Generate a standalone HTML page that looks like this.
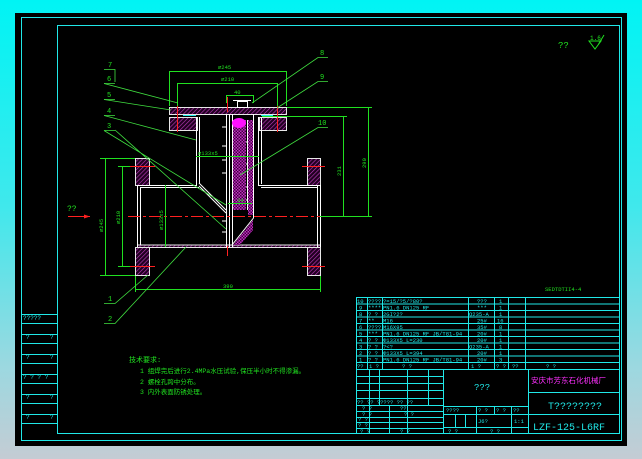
<!DOCTYPE html>
<html><head><meta charset="utf-8"><style>
html,body{margin:0;padding:0;width:642px;height:459px;overflow:hidden;background:linear-gradient(180deg,#00f4f4 0%,#40e8ec 45%,#9cd8e0 80%,#c4ccd4 100%);}
svg{position:absolute;left:0;top:0}
text{font-family:"Liberation Mono","Noto Sans CJK SC",monospace}
</style></head><body>
<svg width="642" height="459" viewBox="0 0 642 459" xmlns="http://www.w3.org/2000/svg">
<defs>
<pattern id="h" width="3" height="3" patternUnits="userSpaceOnUse" patternTransform="rotate(45)"><rect width="3" height="3" fill="#200020"/><line x1="0" y1="0" x2="0" y2="3" stroke="#c03cc0" stroke-width="1.2"/></pattern>
<pattern id="c" width="3" height="3" patternUnits="userSpaceOnUse"><rect width="3" height="3" fill="#c030c0"/><rect width="1.5" height="1.5" fill="#400040"/><rect x="1.5" y="1.5" width="1.5" height="1.5" fill="#400040"/></pattern>
</defs>
<rect x="15" y="13" width="612" height="433" fill="#000"/>
<g fill="none" stroke="#20e8e8" stroke-width="1">
<rect x="21.5" y="17.5" width="600" height="423"/>
<rect x="57.5" y="25.5" width="562" height="408"/>
<!-- left strip -->
<line x1="21" y1="314.5" x2="57" y2="314.5"/><line x1="21" y1="323.5" x2="57" y2="323.5"/>
<line x1="21" y1="334.5" x2="57" y2="334.5"/><line x1="21" y1="343.5" x2="57" y2="343.5"/>
<line x1="21" y1="354.5" x2="57" y2="354.5"/><line x1="21" y1="363.5" x2="57" y2="363.5"/>
<line x1="21" y1="374.5" x2="57" y2="374.5"/><line x1="21" y1="383.5" x2="57" y2="383.5"/>
<line x1="21" y1="394.5" x2="57" y2="394.5"/><line x1="21" y1="403.5" x2="57" y2="403.5"/>
<line x1="21" y1="414.5" x2="57" y2="414.5"/><line x1="21" y1="423.5" x2="57" y2="423.5"/>
<!-- parts list -->
<rect x="356.5" y="297.5" width="263" height="136"/>
<line x1="356" y1="304" x2="619" y2="304"/><line x1="356" y1="310.5" x2="619" y2="310.5"/>
<line x1="356" y1="317" x2="619" y2="317"/><line x1="356" y1="323.5" x2="619" y2="323.5"/>
<line x1="356" y1="330" x2="619" y2="330"/><line x1="356" y1="336.5" x2="619" y2="336.5"/>
<line x1="356" y1="343" x2="619" y2="343"/><line x1="356" y1="349.5" x2="619" y2="349.5"/>
<line x1="356" y1="356" x2="619" y2="356"/><line x1="356" y1="362.5" x2="619" y2="362.5"/>
<line x1="356" y1="369.5" x2="619" y2="369.5"/>
<line x1="367.5" y1="297" x2="367.5" y2="369"/><line x1="382.5" y1="297" x2="382.5" y2="369"/>
<line x1="468.5" y1="297" x2="468.5" y2="369"/><line x1="494.5" y1="297" x2="494.5" y2="369"/>
<line x1="508.5" y1="297" x2="508.5" y2="369"/><line x1="525.5" y1="297" x2="525.5" y2="369"/>
<!-- title block -->
<line x1="443.5" y1="369" x2="443.5" y2="434"/><line x1="528.5" y1="369" x2="528.5" y2="434"/>
<line x1="528" y1="392.5" x2="619" y2="392.5"/><line x1="528" y1="414.5" x2="619" y2="414.5"/>
<line x1="443" y1="406.5" x2="528" y2="406.5"/><line x1="443" y1="414.5" x2="528" y2="414.5"/>
<line x1="443" y1="427.5" x2="528" y2="427.5"/>
<line x1="476.5" y1="406" x2="476.5" y2="434"/><line x1="494.5" y1="406" x2="494.5" y2="414"/>
<line x1="511.5" y1="406" x2="511.5" y2="434"/><line x1="455.5" y1="414" x2="455.5" y2="428"/>
<line x1="465.5" y1="414" x2="465.5" y2="428"/>
<line x1="356" y1="376.5" x2="443" y2="376.5"/><line x1="356" y1="383.5" x2="443" y2="383.5"/>
<line x1="356" y1="390.5" x2="443" y2="390.5"/><line x1="356" y1="398.5" x2="443" y2="398.5"/>
<line x1="356" y1="405.5" x2="443" y2="405.5"/><line x1="356" y1="411.5" x2="443" y2="411.5"/>
<line x1="356" y1="417.5" x2="443" y2="417.5"/><line x1="356" y1="422.5" x2="443" y2="422.5"/>
<line x1="356" y1="428.5" x2="443" y2="428.5"/>
<line x1="369.5" y1="369" x2="369.5" y2="405"/><line x1="379.5" y1="369" x2="379.5" y2="405"/>
<line x1="407.5" y1="369" x2="407.5" y2="434"/><line x1="428.5" y1="369" x2="428.5" y2="405"/>
<line x1="369.5" y1="405" x2="369.5" y2="434"/><line x1="389.5" y1="405" x2="389.5" y2="434"/>
</g>
<g fill="#20e8e8" font-size="6">
<text x="23" y="320">?????</text><text x="26" y="339">?</text><text x="50" y="339">?</text>
<text x="26" y="359">?</text><text x="50" y="359">?</text><text x="23" y="379">? ? ? ?</text>
<text x="26" y="399">?</text><text x="50" y="399">?</text><text x="26" y="419">?</text><text x="50" y="419">?</text>
<g font-size="5.5">
<text x="357" y="303">10</text><text x="368" y="303">????</text><text x="383" y="303">?=15/?5/?80?</text><text x="477" y="303">???</text><text x="499" y="303">1</text>
<text x="359" y="309.5">9</text><text x="368" y="309.5">****</text><text x="383" y="309.5">PN1.6 DN125 RF</text><text x="477" y="309.5">***</text><text x="499" y="309.5">1</text>
<text x="359" y="316">8</text><text x="368" y="316">? ?</text><text x="383" y="316">2GI?2?</text><text x="469" y="316">Q235-A</text><text x="499" y="316">1</text>
<text x="359" y="322.5">7</text><text x="368" y="322.5">**</text><text x="383" y="322.5">M16</text><text x="477" y="322.5">25#</text><text x="497" y="322.5">16</text>
<text x="359" y="329">6</text><text x="368" y="329">????</text><text x="383" y="329">M16X95</text><text x="477" y="329">35#</text><text x="499" y="329">8</text>
<text x="359" y="335.5">5</text><text x="368" y="335.5">***</text><text x="383" y="335.5">PN1.6 DN125 RF JB/T81-94</text><text x="477" y="335.5">20#</text><text x="499" y="335.5">1</text>
<text x="359" y="342">4</text><text x="368" y="342">? ?</text><text x="383" y="342">Φ133X5 L=230</text><text x="477" y="342">20#</text><text x="499" y="342">1</text>
<text x="359" y="348.5">3</text><text x="368" y="348.5">? ?</text><text x="383" y="348.5">?&lt;?</text><text x="469" y="348.5">Q235-A</text><text x="499" y="348.5">1</text>
<text x="359" y="355">2</text><text x="368" y="355">? ?</text><text x="383" y="355">Φ133X5 L=394</text><text x="477" y="355">20#</text><text x="499" y="355">1</text>
<text x="359" y="361.5">1</text><text x="368" y="361.5">? ?</text><text x="383" y="361.5">PN1.6 DN125 RF JB/T81-94</text><text x="477" y="361.5">20#</text><text x="499" y="361.5">3</text>
<text x="357" y="368">??</text><text x="369" y="368">1 ?</text><text x="402" y="368">?   ?</text><text x="471" y="368">1 ?</text><text x="496" y="368">? ?</text><text x="512" y="368">??</text><text x="546" y="368">? ?</text>
<text x="357" y="404">?? ?? ????? ??  ??</text>
<text x="362" y="410">? ?</text><text x="400" y="410">??</text>
<text x="362" y="416">? ?</text><text x="404" y="416">?   ?</text>
<text x="358" y="421">? ?</text><text x="358" y="427">? ?</text>
<text x="360" y="433">? ?</text><text x="400" y="433">?   ?</text><text x="448" y="433">?   ?</text><text x="490" y="433">?   ?</text>
<text x="446" y="412">????</text><text x="478" y="412">? ?</text><text x="496" y="412">? ?</text><text x="513" y="412">??</text>
<text x="478" y="423">J6?</text><text x="514" y="423">1:1</text>
</g>
<text x="474" y="390" font-size="9">???</text>
<text x="548" y="409" font-size="10">T????????</text>
<text x="533" y="430" font-size="10">LZF-125-L6RF</text>
</g>
<text x="531" y="383" font-size="7.5" fill="#ff30ff">安庆市芳东石化机械厂</text>
<!-- drawing -->
<g stroke="#e8e8e8" stroke-width="1" fill="url(#h)">
<rect x="169.5" y="107.5" width="117" height="7"/>
<rect x="169.5" y="117.5" width="28" height="13"/>
<rect x="259.5" y="117.5" width="27" height="13"/>
<rect x="135.5" y="158.5" width="14" height="27"/>
<rect x="135.5" y="247.5" width="14" height="28"/>
<rect x="307.5" y="158.5" width="13" height="27"/>
<rect x="307.5" y="247.5" width="13" height="28"/>
<rect x="137.5" y="245" width="183" height="2.5"/>
</g>
<g stroke="#fff" stroke-width="1" fill="none">
<path d="M196.5 117V186M199.5 117V184M258.5 117V186M261.5 117V184"/>
<path d="M137 185.5H196.5M140 187.5H199M258.5 185.5H317M261 187.5H317"/>
<path d="M137.5 185V247M140.5 187V245M317.5 185V247M320.5 185V247"/>
<path d="M199 186L226 213M199 183L226 210"/>
<path d="M226.5 114V247M229.5 114V247M232.5 114V247M253.5 114V218L232 245"/>
<path d="M233 142H253M233 164H253M233 187H253M233 200H253M247.5 120V210"/>
<path d="M222 127H226M222 146H226M222 160H226M222 173H226M222 221H226M222 232H226"/>
<rect x="237.5" y="101.5" width="10" height="6"/>
<path d="M233 100.5H251"/>
</g>
<rect x="233" y="120" width="13" height="90" fill="url(#c)"/>
<rect x="248" y="120" width="5" height="95" fill="url(#c)"/>
<path d="M233 245L253 220V230L240 245Z" fill="url(#c)"/>
<ellipse cx="239" cy="123" rx="7" ry="5" fill="#ff10ff"/>
<g stroke="#20e8e8"><path d="M183 115.5H196M261 115.5H273"/></g>
<g stroke="#ff2020" stroke-width="1" fill="none" stroke-dasharray="12 3 3 3">
<path d="M128 216.5H330"/>
</g>
<g stroke="#ff2020" fill="none">
<path d="M130 166.5H155M130 266.5H155M302 166.5H325M302 266.5H325M227.5 97V112M227.5 246V256M177.5 104V132M277.5 104V132"/>
<path d="M68 216.5H90"/>
</g>
<path d="M90 216.5l-6 -2v4z" fill="#ff2020"/>
<!-- dims -->
<g stroke="#20e020" fill="none" stroke-width="1">
<path d="M169.5 71V106M286.5 71V106M169 71.5H286M177.5 83V106M277.5 83V106M177 83.5H277M226.5 95V103M253.5 95V103M226 95.5H253"/>
<path d="M135.5 276V292M320.5 276V292M135 289.5H320"/>
<path d="M105.5 158V275M100 158.5H135M100 275.5H135M122.5 166V266M118 166.5H130M118 266.5H130M165.5 185V247"/>
<path d="M343.5 116V216M368.5 107V216M287 107.5H372M262 116.5H347M320 216.5H372"/>
<path d="M196 156.5H259M228 203.5H252"/>
</g>
<g stroke="#40e040" fill="none" stroke-width="0.8">
<path d="M104 69.5H115V82M104 83.5L178 103M104 99.5L171 110M104 115.5L196 140M104 130.5L226 205M115 130L226 229M104 130.5H115"/>
<path d="M328 57.5H318L252 103M328 81.5H318L277 108M328 127.5H318L240 175"/>
<path d="M104 303.5H115L148 275M104 323.5H115L186 247"/>
<path d="M104 83.5H115M104 99.5H115M104 115.5H115"/>
</g>
<g fill="#20e020" font-size="7">
<text x="108" y="67">7</text><text x="107" y="81">6</text><text x="107" y="97">5</text><text x="107" y="113">4</text><text x="107" y="128">3</text>
<text x="320" y="55">8</text><text x="320" y="79">9</text><text x="318" y="125">10</text>
<text x="108" y="301">1</text><text x="108" y="321">2</text>
<g font-size="5.5"><text x="218" y="69">⌀245</text><text x="221" y="81">⌀210</text><text x="234" y="94">40</text><text x="223" y="288">390</text>
<text x="198" y="155">⌀133x5</text><text x="237" y="202">34</text>
<text transform="translate(103,232) rotate(-90)">⌀245</text><text transform="translate(120,224) rotate(-90)">⌀210</text><text transform="translate(163,230) rotate(-90)">⌀133x5</text>
<text transform="translate(341,176) rotate(-90)">231</text><text transform="translate(366,168) rotate(-90)">290</text>
<text x="545" y="291">SEDTDTII4-4</text></g>
<text x="67" y="211" font-size="8">??</text>
<text x="558" y="48" font-size="9">??</text>
<text x="590" y="40" font-size="6">1.6</text>
<text x="129" y="362" font-size="7">技术要求:</text>
<text x="140" y="373" font-size="6.5">1 组焊完后进行2.4MPa水压试验,保压半小时不得渗漏。</text>
<text x="140" y="384" font-size="6.5">2 螺栓孔跨中分布。</text>
<text x="140" y="394" font-size="6.5">3 内外表面防锈处理。</text>
</g>
<path d="M589 41H601L595 49Z M598 45L604 35" stroke="#20e020" fill="none"/>
</svg>
</body></html>
